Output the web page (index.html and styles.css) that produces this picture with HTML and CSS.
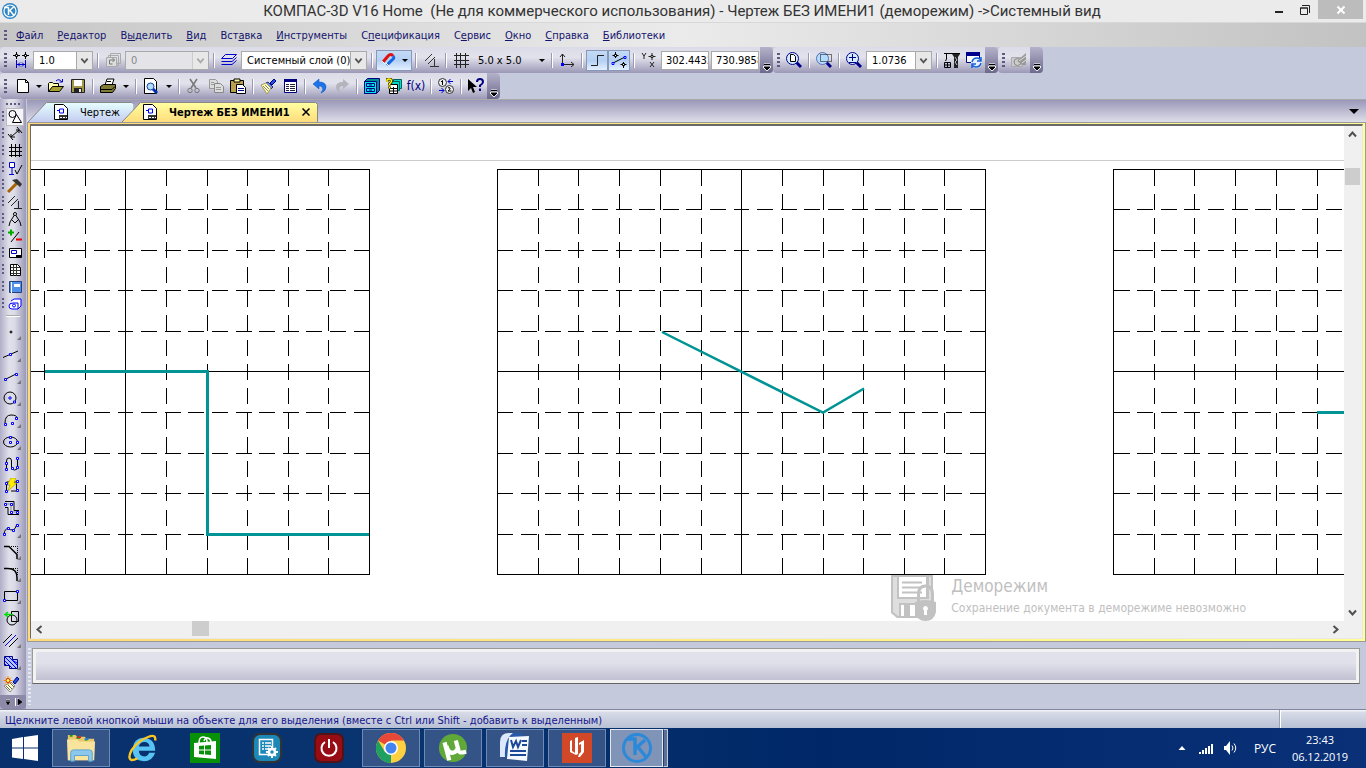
FILE: index.html
```html
<!DOCTYPE html>
<html lang="ru">
<head>
    <meta charset="UTF-8">
    <title>КОМПАС-3D V16 Home</title>
    <link rel="stylesheet" href="styles.css">
</head>
<body>
    <header class="titlebar">
        <svg class="app-icon" viewBox="0 0 16 16"><circle cx="8" cy="8" r="8" fill="#2f86c5"/><circle cx="8" cy="8" r="6" fill="none" stroke="#fff" stroke-width="1.2"/><path d="M2 4.500h5M6.500 4v8M6.500 8.500l5-4.500M8 7.500l4 5" stroke="#fff" stroke-width="1.500" fill="none"/></svg>
        <h1 class="title">КОМПАС-3D V16 Home&nbsp; (Не для коммерческого использования) - Чертеж БЕЗ ИМЕНИ1 (деморежим) -&gt;Системный вид</h1>
        <div class="win-buttons">
            <button class="win-btn" aria-label="Свернуть"><svg viewBox="0 0 12 12"><path d="M2 8h8" stroke="#222" stroke-width="2"/></svg></button>
            <button class="win-btn" aria-label="Развернуть"><svg viewBox="0 0 12 12"><path d="M1.500 4v6.500h7V4zM3 1.500h7.500V9M1 4h8" fill="none" stroke="#222"/></svg></button>
            <button class="win-btn win-close" aria-label="Закрыть"><svg viewBox="0 0 12 12"><path d="M2.500 2.500l7 7M9.500 2.500l-7 7" stroke="#fff" stroke-width="2"/></svg></button>
        </div>
    </header>

    <nav class="menu">
        <span class="grip"></span>
        <a href="#"><u>Ф</u>айл</a>
        <a href="#"><u>Р</u>едактор</a>
        <a href="#">В<u>ы</u>делить</a>
        <a href="#"><u>В</u>ид</a>
        <a href="#">Вст<u>а</u>вка</a>
        <a href="#"><u>И</u>нструменты</a>
        <a href="#">С<u>п</u>ецификация</a>
        <a href="#">С<u>е</u>рвис</a>
        <a href="#"><u>О</u>кно</a>
        <a href="#"><u>С</u>правка</a>
        <a href="#"><u>Б</u>иблиотеки</a>
    </nav>

    <div class="toolbars">
        <div class="toolbar-row">
            <!-- current state -->
            <div class="toolbar">
                <span class="grip"></span>
                <button class="tb" aria-label="Шаг курсора"><svg viewBox="0 0 16 16"><path d="M0 3.500h7M3.500 0v7M9 3.500h7M12.500 0v7" stroke="#000"/><path d="M2.500 2.500h2v2h-2zM11.500 2.500h2v2h-2z" fill="#fff" stroke="#000"/><path d="M3.500 8v8M12.500 8v8M4 12.500h8M7 10.500l-2 2 2 2M9 10.500l2 2-2 2" stroke="#00c"/></svg></button>
                <label class="combo w60"><select aria-label="Шаг"><option>1.0</option></select><svg viewBox="0 0 10 10"><path d="M1.500 3l3.500 4 3.500-4"/></svg></label>
                <span class="sep"></span>
                <button class="tb off" aria-label="Состояния видов"><svg viewBox="0 0 16 16"><path d="M5.500 5V1.500h10v10H12M3.500 7V3.500h10v10H11" stroke="#aaa"/><path d="M1.500 5.500h10v9h-10z" fill="#ddd" stroke="#aaa"/><path d="M4.500 12V8h5M7.500 6l2 2-2 2M4.500 12h3" stroke="#777"/></svg></button>
                <label class="combo w84 off"><select aria-label="Вид" disabled><option>0</option></select><svg viewBox="0 0 10 10"><path d="M1.500 3l3.500 4 3.500-4"/></svg></label>
                <span class="sep"></span>
                <button class="tb" aria-label="Слои"><svg viewBox="0 0 16 16"><path d="M4.500 2.500h11l-4 4h-11zM2.500 9.500h8.500l4.500-4M.5 9.500h3M2.500 12.500h8.500l4.500-4M.5 12.500h3" fill="none" stroke="#00c"/></svg></button>
                <label class="combo w126"><select aria-label="Слой"><option>Системный слой (0)</option></select><svg viewBox="0 0 10 10"><path d="M1.500 3l3.500 4 3.500-4"/></svg></label>
                <span class="sep"></span>
                <button class="tb wide on" aria-label="Привязки"><svg viewBox="0 0 16 16"><path d="M3 10L8 4q3-3 5 0" stroke="#e01010" stroke-width="3"/><path d="M13 4q2 2-1 4l-5 5" stroke="#1467e0" stroke-width="3"/><path d="M2 9l3 3M6 11l3 3" stroke="#fff" stroke-width="1"/></svg><i class="drop"></i></button>
                <span class="sep"></span>
                <button class="tb" aria-label="Запретить привязки"><svg viewBox="0 0 16 16"><path d="M2 9l7-7M5 12L12 5M7 14.500h9M11.500 7v7" stroke="#333"/></svg></button>
                <span class="sep"></span>
                <button class="tb" aria-label="Сетка"><svg viewBox="0 0 16 16"><path d="M1 3.500h15M1 8.500h15M1 12.500h15M3.500 1v15M7.500 1v15M12.500 1v15" stroke="#222"/></svg></button>
                <button class="grid-step">5.0 x 5.0<i class="drop"></i></button>
                <span class="sep"></span>
                <button class="tb" aria-label="Локальная СК"><svg viewBox="0 0 16 16"><path d="M3.500 13V2M1 5l2.500-3L6 5M4 12.500h11M12 10l3 2.500-3 2.500" stroke="#222"/><path d="M2 11h3v3H2z" fill="#00f"/></svg></button>
                <span class="sep"></span>
                <button class="tb on" aria-label="Ортогональное черчение"><svg viewBox="0 0 16 16"><path d="M2 13.500h6.500V3.500H15" stroke="#222"/></svg></button>
                <button class="tb on" aria-label="Округление"><svg viewBox="0 0 16 16"><path d="M4.500 0v6M1.500 3.500h6M12.500 10v6M9.500 12.500h6M2 11l12-6" stroke="#000"/><path d="M3.500 2.500h2v2h-2zM11.500 11.500h2v2h-2z" fill="#fff" stroke="#000"/><path d="M1 10.500h2v2H1zM13 4.500h2v2h-2z" fill="#fff" stroke="#00f"/></svg></button>
                <span class="sep"></span>
                <button class="tb" aria-label="Координаты"><svg viewBox="0 0 16 16"><path d="M1 1l2 3 2-3M3 4v3M9 10l4 5M13 10l-4 5M11 1v7M7.500 4.500h7" stroke="#222"/><path d="M10 3.500h2v2h-2z" fill="#fff" stroke="#222"/></svg></button>
                <input class="coord" aria-label="X" value="302.4432">
                <input class="coord" aria-label="Y" value="730.9858">
                <button class="cap" aria-label="Параметры панели"><svg viewBox="0 0 8 8"><path d="M1 1.500h6M1 4h6L4 7z" fill="#000" stroke="#fff" stroke-width="2"/><path d="M1 1.500h6M1 4h6L4 7z" fill="#000" stroke="#000" stroke-width="1"/></svg></button>
            </div>
            <!-- view -->
            <div class="toolbar">
                <span class="grip"></span>
                <button class="tb" aria-label="Показать все"><svg viewBox="0 0 16 16"><path d="M10 10l5 5" stroke="#00008c" stroke-width="3"/><circle cx="6.500" cy="6.500" r="6" fill="#d4ecff" stroke="#00008c"/><path d="M4.500 2.500h3l2 2v5h-5z" fill="#fff" stroke="#000"/></svg></button>
                <span class="sep"></span>
                <button class="tb" aria-label="Увеличить рамкой"><svg viewBox="0 0 16 16"><path d="M10 10l5 5" stroke="#00008c" stroke-width="3"/><circle cx="6.500" cy="6.500" r="6" fill="#b4dcff" stroke="#5870b0"/><path d="M4.500 2.500h11v7h-11z" stroke="#000" stroke-dasharray="1 1"/></svg></button>
                <span class="sep"></span>
                <button class="tb" aria-label="Масштаб"><svg viewBox="0 0 16 16"><path d="M10 10l5 5" stroke="#00008c" stroke-width="3"/><circle cx="6.500" cy="6.500" r="6" fill="#d4ecff" stroke="#00008c"/><path d="M3 5.500h7M6.500 2v7M3 10.500h7" stroke="#000080"/></svg></button>
                <label class="combo w66"><select aria-label="Текущий масштаб"><option>1.0736</option></select><svg viewBox="0 0 10 10"><path d="M1.500 3l3.500 4 3.500-4"/></svg></label>
                <span class="sep"></span>
                <button class="tb" aria-label="Перестроить"><svg viewBox="0 0 16 16"><path d="M0 1.500h16M2.500 2v5l-1 2M.5 10.500h6v5h-6zM0 13h7M3.500 10v6" stroke="#000"/><path d="M8 2h8l-2 3v11h-4V5z" fill="#222"/><path d="M11 5l2 3-2 2 2 3" stroke="#bbb"/></svg></button>
                <button class="tb" aria-label="Обновить"><svg viewBox="0 0 16 16"><path d="M.5 1.500h13v9H.5z" fill="#fff" stroke="#00008c"/><path d="M0 0h14v4H0z" fill="#00008c"/><circle cx="10.500" cy="10.500" r="5.500" fill="#e6f0ff"/><path d="M6 10q1-4 5-4 2 0 4 2M15 5v4h-4M15 11q-1 4-5 4-2 0-4-2M6 16v-4h4" stroke="#1660d8" stroke-width="1.500"/></svg></button>
                <button class="cap" aria-label="Параметры панели"><svg viewBox="0 0 8 8"><path d="M1 1.500h6M1 4h6L4 7z" fill="#000" stroke="#fff" stroke-width="2"/><path d="M1 1.500h6M1 4h6L4 7z" fill="#000" stroke="#000" stroke-width="1"/></svg></button>
            </div>
            <div class="toolbar">
                <span class="grip"></span>
                <button class="tb off" aria-label="Режим"><svg viewBox="0 0 16 16"><path d="M.5 5.500h11v9H.5z" fill="#ccc" stroke="#aaa"/><circle cx="6.500" cy="10" r="3.500" stroke="#888"/><path d="M6 9l9-8v12h-4z" fill="#999"/><path d="M8 9l7-5M11 11l4-3" stroke="#ddd"/></svg></button>
                <button class="cap" aria-label="Параметры панели"><svg viewBox="0 0 8 8"><path d="M1 1.500h6M1 4h6L4 7z" fill="#000" stroke="#fff" stroke-width="2"/><path d="M1 1.500h6M1 4h6L4 7z" fill="#000" stroke="#000" stroke-width="1"/></svg></button>
            </div>
        </div>

        <div class="toolbar-row">
            <!-- standard -->
            <div class="toolbar">
                <span class="grip"></span>
                <button class="tb shift" aria-label="Создать"><svg viewBox="0 0 16 16"><path d="M2.500 1.500h8l3 3v10h-11z" fill="#fff" stroke="#000"/><path d="M10.500 1.500v3h3" stroke="#000"/></svg></button>
                <button class="tb-drop" aria-label="Список"><i class="drop"></i></button>
                <button class="tb" aria-label="Открыть"><svg viewBox="0 0 16 16"><path d="M.5 13.500v-8l1-1h3l1 1h5v3" fill="#ffffb0" stroke="#000"/><path d="M.5 13.500l4-5h11l-4 5z" fill="#a8a030" stroke="#000"/><path d="M8 3q3-3 6 1M11.500 4h3V1" stroke="#00c"/></svg></button>
                <button class="tb" aria-label="Сохранить"><svg viewBox="0 0 16 16"><path d="M1.500 1.500h13v13h-13z" fill="#a09848" stroke="#222"/><path d="M4 2h8v6H4z" fill="#fff"/><path d="M4 10h8v4.500H4z" fill="#222"/><path d="M9 11h2v3H9z" fill="#eee"/></svg></button>
                <span class="sep"></span>
                <button class="tb" aria-label="Печать"><svg viewBox="0 0 16 16"><path d="M5 7l2-6h7l-2 6z" fill="#fff" stroke="#000"/><path d="M.5 8.500l3-2h12v4l-3 4H.5z" fill="#807c38" stroke="#000"/><path d="M1 11.500h11l3-3M7 3.500h4" stroke="#000"/></svg></button>
                <button class="tb-drop" aria-label="Список"><i class="drop"></i></button>
                <span class="sep"></span>
                <button class="tb" aria-label="Просмотр"><svg viewBox="0 0 16 16"><path d="M1.500.5h9l3 3v12h-12z" fill="#fff" stroke="#000"/><path d="M10 11l4 4" stroke="#0030b0" stroke-width="3"/><circle cx="7.500" cy="8.500" r="3.500" fill="#b4dcff" stroke="#1040a0"/></svg></button>
                <button class="tb-drop" aria-label="Список"><i class="drop"></i></button>
                <span class="sep"></span>
                <button class="tb off" aria-label="Вырезать"><svg viewBox="0 0 16 16"><path d="M4 1l6 9M11 1L5 10" stroke="#777" stroke-width="1.500"/><circle cx="4" cy="12.500" r="2.200" stroke="#777"/><circle cx="11" cy="12.500" r="2.200" stroke="#777"/></svg></button>
                <button class="tb off" aria-label="Копировать"><svg viewBox="0 0 16 16"><path d="M1.500 1.500h6l2 2v7h-8z" fill="#ddd" stroke="#999"/><path d="M6.500 5.500h6l3 3v6h-9z" fill="#ddd" stroke="#888"/><path d="M3 4.500h3M3 6.500h3M8 9.500h5M8 11.500h5" stroke="#999"/></svg></button>
                <button class="tb" aria-label="Вставить"><svg viewBox="0 0 16 16"><path d="M.5 2.500h13v12H.5z" fill="#b8a050" stroke="#000"/><path d="M4 3V1h6v3H4z" fill="#ffffa0" stroke="#000"/><path d="M6.500 6.500h6l3 3v6h-9z" fill="#fff" stroke="#000"/><path d="M8 10.500h6M8 12.500h6" stroke="#000080"/></svg></button>
                <span class="sep"></span>
                <button class="tb" aria-label="Копировать свойства"><svg viewBox="0 0 16 16"><path d="M10 5l4-4 2 2-4 4z" fill="#2050e0" stroke="#000080"/><path d="M6 5l2-1 5 5-2 2z" fill="#7090f0" stroke="#203080"/><path d="M1 7l5-2 5 5-4 6z" fill="#ffffb0" stroke="#a09860"/><path d="M3 8l5 5M5 7l4 4" stroke="#888"/></svg></button>
                <button class="tb" aria-label="Свойства"><svg viewBox="0 0 16 16"><path d="M2.500 1.500h12v13h-12z" fill="#fff" stroke="#000080"/><path d="M2 1h13v3H2z" fill="#000080"/><path d="M4 6.500h3M4 8.500h3M4 10.500h3M4 12.500h3M8 6.500h5M8 8.500h5M8 10.500h5M8 12.500h5" stroke="#223"/></svg></button>
                <span class="sep"></span>
                <button class="tb" aria-label="Отменить"><svg viewBox="0 0 16 16"><path d="M1 6l6-5v3q7 0 7 5 0 4-5 6 3-4 1-6-1-1-3-1v3z" fill="#1d74e8" stroke="#0050c0" stroke-width=".5"/></svg></button>
                <button class="tb off" aria-label="Повторить"><svg viewBox="0 0 16 16"><path d="M15 6L9 1v3Q2 4 2 9q0 4 5 6-3-4-1-6 1-1 3-1v3z" fill="#b4b4bc"/></svg></button>
                <span class="sep"></span>
                <button class="tb" aria-label="Менеджер библиотек"><svg viewBox="0 0 16 16"><path d="M.5 3.500l3-3h12v12l-3 3H.5z" fill="#008c8c" stroke="#000080"/><path d="M.5 3.500h12v12H.5z" fill="#00e4e4" stroke="#000080"/><path d="M2.500 5.500h8v3h-8zM2.500 10.500h8v3h-8zM5 7h3M5 12h3" stroke="#000080"/></svg></button>
                <button class="tb" aria-label="Менеджер шаблонов"><svg viewBox="0 0 16 16"><path d="M7.500 1.500h8v9h-8z" fill="#00d8c8" stroke="#006060"/><path d="M5.500 3.500h8v9h-8z" fill="#00d8c8" stroke="#006060"/><path d="M3.500 6.500h8v9h-8z" fill="#fff" stroke="#000"/><path d="M4 10.500h8M4 13h8M7.500 9v6" stroke="#000"/><path d="M1 4V2.500q0-1.500 2-1.500t2.500 1.500T3.500 6v1.500M3.500 8.500v2" stroke="#403000" stroke-width="3"/><path d="M1 4V2.500q0-1.500 2-1.500t2.500 1.500T3.500 6v1.500M3.500 8.500v2" stroke="#ffff00" stroke-width="1.500"/></svg></button>
                <button class="tb fx">f(x)</button>
                <span class="sep"></span>
                <button class="tb" aria-label="Перенумеровать"><svg viewBox="0 0 16 16"><circle cx="4.500" cy="4.500" r="4" fill="#eee" stroke="#333"/><circle cx="11.500" cy="11.500" r="4" fill="#eee" stroke="#333"/><path d="M3 4l1.500-1.500V7M10 10q1-1 2 0t-2 3h3.500" stroke="#000"/><path d="M10 3.500h5M12.500 1L10 3.500 12.500 6M1 12.500h5M3.500 10L6 12.500 3.500 15" stroke="#00c"/></svg></button>
                <span class="sep"></span>
                <button class="tb" aria-label="Справка"><svg viewBox="0 0 16 16"><path d="M0 1v12l3-3 2 5 2-1-2-5h4z" fill="#000"/><path d="M9 4q0-3 3-3t3 3q0 1.500-3 3.500V9M12 10.500v2.500" stroke="#000080" stroke-width="2"/></svg></button>
                <button class="cap" aria-label="Параметры панели"><svg viewBox="0 0 8 8"><path d="M1 1.500h6M1 4h6L4 7z" fill="#000" stroke="#fff" stroke-width="2"/><path d="M1 1.500h6M1 4h6L4 7z" fill="#000" stroke="#000" stroke-width="1"/></svg></button>
            </div>
        </div>
    </div>

    <main class="work">
        <aside class="side">
            <div class="side-dots"></div>
            <div class="pages">
                <button class="page on" aria-label="Геометрия"><svg viewBox="0 0 16 16"><circle cx="5.500" cy="5" r="3.500" stroke="#000"/><path d="M5.500 13.500l4-8 5 8z" fill="#fff" stroke="#000"/></svg></button>
                <button class="page" aria-label="Размеры"><svg viewBox="0 0 16 16"><path d="M4 11l8-7M4 8v3h4M9 4h3v3M1 8l5 6M10 1l5 6" stroke="#000"/></svg></button>
                <button class="page" aria-label="Обозначения"><svg viewBox="0 0 16 16"><path d="M2 4.500h13M2 8.500h13M2 12.500h13M4.500 1v13M8.500 1v13M12.500 1v13" stroke="#000"/></svg></button>
                <button class="page" aria-label="Обозначения ПСП"><svg viewBox="0 0 16 16"><path d="M2.500 2.500h5v5h-5zM5 8v6M2 14.500h5" fill="#fff" stroke="#00c"/><path d="M8 10l2 4 5-9" stroke="#000"/></svg></button>
                <button class="page" aria-label="Редактирование"><svg viewBox="0 0 16 16"><path d="M1 15l9-9" stroke="#a86000" stroke-width="3"/><path d="M5 3l5-1 5 5-2 3z" fill="#333"/></svg></button>
                <button class="page" aria-label="Параметризация"><svg viewBox="0 0 16 16"><path d="M1 9l7-7M4 12L11 5M7 14.500h8M11.500 7v7" stroke="#222"/></svg></button>
                <button class="page" aria-label="Измерения"><svg viewBox="0 0 16 16"><path d="M2 15l1-4 5-8 5 8 1 4M5 9l3 3 3-3" stroke="#000"/><circle cx="8" cy="3" r="1.500" fill="#fff" stroke="#000"/></svg></button>
                <button class="page" aria-label="Выделение"><svg viewBox="0 0 16 16"><path d="M1 4.500h6M4 1.500v6" stroke="#0a0" stroke-width="2"/><path d="M4 14l8-10" stroke="#000"/><path d="M9 11.500h6" stroke="#e00" stroke-width="2"/></svg></button>
                <button class="page" aria-label="Виды"><svg viewBox="0 0 16 16"><path d="M2.500 3.500h12v9h-12z" fill="#fff" stroke="#000"/><path d="M4.500 5.500h5v3h-5z" stroke="#00c"/><path d="M9 10h5v3H9z" fill="#000"/></svg></button>
                <button class="page" aria-label="Спецификация"><svg viewBox="0 0 16 16"><path d="M3.500 2.500h7l3 3v8h-10z" fill="#fff" stroke="#000"/><path d="M4 5.500h9M4 8.500h9M4 11.500h9M6.500 3v11M9.500 3v11" stroke="#333"/></svg></button>
                <button class="page" aria-label="Отчеты"><svg viewBox="0 0 16 16"><path d="M2.500 2.500h12v11h-12z" fill="#5090e8" stroke="#204080"/><path d="M4.500 3v11" stroke="#fff"/><path d="M7 5h6v3H7z" fill="#fff"/></svg></button>
                <button class="page" aria-label="Вставки"><svg viewBox="0 0 16 16"><path d="M4 5l3-2h7v7l-3 3H5q-3 0-3-3t4-3h5v6" fill="#fff" stroke="#00f"/><circle cx="7" cy="9.500" r="1.500" stroke="#00f"/></svg></button>
            </div>
            <div class="side-line"></div>
            <div class="tools">
                <button class="tool more" aria-label="Точка"><svg viewBox="0 0 16 16"><circle cx="8" cy="8" r="1" fill="#888" stroke="#000"/></svg></button>
                <button class="tool more" aria-label="Вспомогательная прямая"><svg viewBox="0 0 16 16"><path d="M0 11.500L15 5" stroke="#000"/><path d="M6.500 7.500h2v2h-2z" fill="#fff" stroke="#00f"/></svg></button>
                <button class="tool more" aria-label="Отрезок"><svg viewBox="0 0 16 16"><path d="M2 11.500L13 6" stroke="#000"/><path d="M1.500 10.500h2v2h-2zM12.500 5.500h2v2h-2z" fill="#fff" stroke="#00f"/></svg></button>
                <button class="tool more" aria-label="Окружность"><svg viewBox="0 0 16 16"><circle cx="7" cy="8" r="6" stroke="#000"/><path d="M6 7h2v2H6zM10.500 11h2v2h-2z" fill="#fff" stroke="#00f"/></svg></button>
                <button class="tool more" aria-label="Дуга"><svg viewBox="0 0 16 16"><path d="M2 11Q2 3 8 3t6 3" stroke="#000"/><path d="M1.500 11.500h2v2h-2zM8.500 10.500h2v2h-2zM12.500 5.500h2v2h-2z" fill="#fff" stroke="#00f"/></svg></button>
                <button class="tool more" aria-label="Эллипс"><svg viewBox="0 0 16 16"><ellipse cx="7.500" cy="8" rx="7" ry="5" stroke="#000"/><path d="M6.500 2.500h2v2h-2zM6.500 7.500h2v2h-2zM13.500 7.500h2v2h-2z" fill="#fff" stroke="#00f"/></svg></button>
                <button class="tool" aria-label="Непрерывный ввод"><svg viewBox="0 0 16 16"><path d="M3.500 13V5q0-3 2.500-3t2.500 3v6q0 3 3 3t3-3V3" stroke="#000"/><path d="M2.500 6.500h2v2h-2zM2.500 12.500h2v2h-2zM8.500 11.500h2v2h-2zM13.500 1.500h2v2h-2zM13.500 10.500h2v2h-2z" fill="#fff" stroke="#00f"/></svg></button>
                <button class="tool" aria-label="Линия"><svg viewBox="0 0 16 16"><path d="M3.500 13V4h10v9H8" stroke="#000"/><path d="M8 0h5l-2 5h3L5 13l2-6H4z" fill="#ffee00" stroke="#a09000" stroke-width=".6"/><path d="M2.500 4.500h2v2h-2zM2.500 12.500h2v2h-2zM13.500 2.500h2v2h-2zM13.500 11.500h2v2h-2z" fill="#fff" stroke="#00f"/></svg></button>
                <button class="tool" aria-label="Мультилиния"><svg viewBox="0 0 16 16"><path d="M2 1.500h9v9h5M2 7.500h3v7h11" stroke="#000"/><path d="M3 4h5v8h6" stroke="#888"/><path d="M1.500 3.500h2v2h-2zM7.500 3.500h2v2h-2zM7.500 11.500h2v2h-2zM13.500 11.500h2v2h-2z" fill="#fff" stroke="#00f"/></svg></button>
                <button class="tool more" aria-label="Кривая"><svg viewBox="0 0 16 16"><path d="M1 12q1-6 4-5t5 1 4-6" stroke="#000"/><path d="M.5 11.500h2v2h-2zM4.500 5.500h2v2h-2zM9.500 7.500h2v2h-2zM13.500 2.500h2v2h-2z" fill="#fff" stroke="#00f"/></svg></button>
                <button class="tool more" aria-label="Фаска"><svg viewBox="0 0 16 16"><path d="M1 2.500h5l8 8V15" stroke="#000" stroke-width="1.500"/><path d="M8 2.500h6.500V10" stroke="#000" stroke-dasharray="1 1"/></svg></button>
                <button class="tool more" aria-label="Скругление"><svg viewBox="0 0 16 16"><path d="M1 2.500h4q9 0 9 9V15" stroke="#000" stroke-width="1.500"/><path d="M8 2.500h6.500V10" stroke="#000" stroke-dasharray="1 1"/></svg></button>
                <button class="tool more" aria-label="Прямоугольник"><svg viewBox="0 0 16 16"><path d="M1.500 3.500h13v9h-13z" stroke="#000"/><path d="M.5 11.500h2v2h-2zM13.500 2.500h2v2h-2z" fill="#fff" stroke="#00f"/></svg></button>
                <button class="tool" aria-label="Собрать контур"><svg viewBox="0 0 16 16"><circle cx="9" cy="10" r="5" stroke="#000"/><path d="M8.500 1.500h7v10h-7z" stroke="#000"/><path d="M3 4.500h7M5 2L2 4.500 5 7" stroke="#0d0" stroke-width="1.500"/></svg></button>
                <button class="tool more" aria-label="Эквидистанта"><svg viewBox="0 0 16 16"><path d="M0 11l9-9M6 15l9-9" stroke="#000"/><path d="M2 14L13 3" stroke="#00f"/></svg></button>
                <button class="tool more" aria-label="Штриховка"><svg viewBox="0 0 16 16"><path d="M1.500 2.500h8v3h5v9h-8v-3h-5z" fill="#b4c4ff" stroke="#000080"/><path d="M2 3l11 11M2 7l7 7M6 3l8 8M2 10l1 1M9 6l5 3" stroke="#00f"/></svg></button>
                <button class="tool" aria-label="Кисть"><svg viewBox="0 0 16 16"><path d="M10 6l4-5 2 2-4 5z" fill="#2050e0" stroke="#000080"/><path d="M1 10l7-4 4 4-5 6z" fill="#ffffd0" stroke="#888"/><path d="M3 10l4 4M5 9l4 4M7 7l4 4" stroke="#666"/><path d="M5 0v9M.5 4.500h9M2 1.500l6 6M8 1.500l-6 6" stroke="#ff9000"/><circle cx="5" cy="4.500" r="2" fill="#ffff60" stroke="#e03000"/></svg></button>
            </div>
            <div class="side-cap"><svg viewBox="0 0 22 8"><path d="M4 1.500h4M4 4.500h4l-2 2.500zM13.500 0v8M16 0v8" stroke="#fff"/><path d="M4 2h4M4 4h4l-2 3zM16 1l4 3-4 3z" fill="#000" stroke="#000" stroke-width=".6"/></svg></div>
        </aside>

        <section class="document">
            <div class="tabs">
                <a class="tab" href="#">
                    <svg class="tab-shape" viewBox="0 0 106 20" preserveAspectRatio="none"><defs><linearGradient id="t1" x2="0" y2="1"><stop offset="0" stop-color="#e6ffff"/><stop offset="1" stop-color="#c4ccf0"/></linearGradient></defs><path d="M0 20L18.500 .5H104l2 2V20" fill="url(#t1)" stroke="#888"/></svg>
                    <svg class="tab-icon" viewBox="0 0 14 16"><path d="M.5.500h9l4 4v11H.5z" fill="#fff" stroke="#000"/><path d="M3 6.500h2M5.500 5v4h4V5z" stroke="#00f" fill="none"/><path d="M5 12.500h8M5 14.500h8M5.500 11v4M8.500 11v4M11.500 11v4M5 11.500h8" stroke="#333" fill="none"/></svg>
                    <span>Чертеж</span>
                </a>
                <a class="tab active" href="#">
                    <svg class="tab-shape" viewBox="0 0 196 20" preserveAspectRatio="none"><defs><linearGradient id="t2" x2="0" y2="1"><stop offset="0" stop-color="#ffffa0"/><stop offset="1" stop-color="#ffdc7c"/></linearGradient></defs><path d="M0 20L18.500 .5H193.500l2 2V20" fill="url(#t2)" stroke="#888"/></svg>
                    <svg class="tab-icon" viewBox="0 0 14 16"><path d="M.5.500h9l4 4v11H.5z" fill="#fff" stroke="#000"/><path d="M3 6.500h2M5.500 5v4h4V5z" stroke="#00f" fill="none"/><path d="M5 12.500h8M5 14.500h8M5.500 11v4M8.500 11v4M11.500 11v4M5 11.500h8" stroke="#333" fill="none"/></svg>
                    <span>Чертеж БЕЗ ИМЕНИ1</span>
                    <svg class="tab-close" viewBox="0 0 8 8"><path d="M.5.500l7 7M7.500.500l-7 7" stroke="#000" stroke-width="1.500"/></svg>
                </a>
                <button class="tab-list" aria-label="Список окон"></button>
            </div>

            <div class="frame">
                <div class="sheet">
                    <div class="canvas">
                        <svg class="drawing" shape-rendering="crispEdges">
                            <defs>
                                <g id="grid" fill="none" stroke="#000">
                                    <path d="M0 0H488V405H0zM244 0V405M0 202H488"/>
                                    <path stroke-dasharray="16 8.300" d="M41 0V405M81 0V405M122 0V405M163 0V405M204 0V405M285 0V405M326 0V405M366 0V405M407 0V405M447 0V405"/>
                                    <path stroke-dasharray="16 7.600" d="M0 40H488M0 81H488M0 121H488M0 162H488M0 243H488M0 284H488M0 324H488M0 365H488"/>
                                </g>
                            </defs>
                            <path d="M0 34.500H4000" stroke="#ccc"/>
                            <use href="#grid" x="-149.500" y="43.500"/>
                            <use href="#grid" x="466.500" y="43.500"/>
                            <use href="#grid" x="1082.500" y="43.500"/>
                            <g fill="none" stroke="#009494" stroke-width="3">
                                <path d="M14 245.500H176.500V408.500H338"/>
                                <path d="M631 206L792 286.500L833 262.500" stroke-width="2.500" shape-rendering="auto"/>
                                <path d="M1286 286.500H1400"/>
                            </g>
                        </svg>
                        <div class="demo">
                            <svg viewBox="0 0 46 46"><path d="M0 0h42v43H6l-6-5z" fill="#c2c2c2"/><path d="M2 2h4v22h32V2h2v39H7l-5-4z" fill="#dedede"/><path d="M8 2h27v20H8z" fill="#fff"/><path d="M11 7.500h20M11 12.500h20M11 17.500h20" stroke="#c2c2c2" stroke-width="2"/><path d="M8 28h24v13H8z" fill="#c2c2c2"/><path d="M10 30h14v11H10z" fill="#fff"/><path d="M13 30h6v11h-6z" fill="#c2c2c2"/><path d="M27.500 28v-9q0-8 7-8t7 8v9" fill="none" stroke="#c2c2c2" stroke-width="3"/><path d="M24 27q11-4 21 0v10q-2 9-10.500 9T24 37z" fill="#c2c2c2"/><path d="M34.500 31a2.500 2.500 0 0 1 1.500 4.500V40h-3v-4.500a2.500 2.500 0 0 1 1.500-4.500z" fill="#fff"/></svg>
                            <div>
                                <p class="demo-title">Деморежим</p>
                                <p class="demo-note">Сохранение документа в деморежиме невозможно</p>
                            </div>
                        </div>
                    </div>
                    <div class="vscroll">
                        <button aria-label="Вверх"><svg viewBox="0 0 9 9"><path d="M1 6.500l3.500-4L8 6.500"/></svg></button>
                        <span class="thumb"></span>
                        <button aria-label="Вниз"><svg viewBox="0 0 9 9"><path d="M1 2.500l3.500 4L8 2.500"/></svg></button>
                    </div>
                    <div class="hscroll">
                        <button aria-label="Влево"><svg viewBox="0 0 9 9"><path d="M6.500 1l-4 3.500L6.500 8"/></svg></button>
                        <span class="thumb"></span>
                        <button aria-label="Вправо"><svg viewBox="0 0 9 9"><path d="M2.500 1l4 3.500L2.500 8"/></svg></button>
                    </div>
                </div>
            </div>

            <div class="props">
                <span class="props-dots"></span>
                <div class="props-panel"></div>
            </div>
        </section>
    </main>

    <div class="status">
        <span class="status-text">Щелкните левой кнопкой мыши на объекте для его выделения (вместе с Ctrl или Shift - добавить к выделенным)</span>
        <span class="status-cell"></span>
    </div>

    <footer class="taskbar">
        <button class="start" aria-label="Пуск"><svg viewBox="0 0 26 26"><path d="M0 4l11-2v10.500H0zM12 2l14-2v12.500H12zM0 13.500h11V24L0 22.500zM12 13.500h14V26l-14-2z" fill="#fff"/></svg></button>
        <button class="task open" aria-label="Проводник"><svg viewBox="0 0 32 30"><path d="M2 1h8l2 2h8l2 2h8v23H2z" fill="#e8c868"/><path d="M1 6h11l2 2h17l-1 20H2z" fill="#f8e49c"/><path d="M4 2h3M11 4h4M20 6h3" stroke="#189820" stroke-width="2"/><path d="M12 3.500h4" stroke="#d02020" stroke-width="2"/><path d="M20 5.500h4" stroke="#2080d8" stroke-width="2"/><path d="M5 29V20q0-3 3-3h17q3 0 3 3v9h-4v-6H9v6z" fill="#8cc8ec" stroke="#58a0d0"/></svg></button>
        <button class="task" aria-label="Internet Explorer"><svg viewBox="0 0 32 30"><path fill-rule="evenodd" d="M29 20q-3 9-12 9Q5 28 5 16.500 6 4 17 4q12 1 12 14H11.500q.5 6 6 6 3.500 0 5-4zM11.500 13.500H23q-.5-5-5.500-5t-6 5z" fill="#58c4f4"/><path d="M29 7q1-7-7-4Q11 7 4 17-1 26 4 28q3 0 6-2" fill="none" stroke="#fcc820" stroke-width="2.500"/></svg></button>
        <button class="task" aria-label="Магазин"><svg viewBox="0 0 30 30"><path d="M0 0h30v30H0z" fill="#089008"/><path d="M4 10l22-2v18L4 24z" fill="#fff"/><path d="M9 10q0-6 4-6t4 5M14 8q1-4 4-3t3 4" fill="none" stroke="#fff" stroke-width="1.500"/><path d="M9 13l5-.5v4H9zM15 12.500l6-.5v4.500h-6zM9 17.500h5v4L9 21zM15 17.500h6V22l-6-.5z" fill="#089008"/></svg></button>
        <button class="task" aria-label="Настройки"><svg viewBox="0 0 30 30"><rect x="1" y="1" width="28" height="28" rx="7" fill="#1c88b8" stroke="#333" stroke-width="2"/><path d="M7.500 6.500h13v15h-13z" fill="none" stroke="#fff" stroke-width="1.500"/><path d="M10 10h2M10 13h2M10 16h2M13 10h6M13 13h6M13 16h4" stroke="#fff" stroke-width="1.500"/><circle cx="20" cy="19" r="3" fill="#1c88b8" stroke="#fff" stroke-width="2.500"/><path d="M20 13v3M20 22v3M14 19h3M23 19h3M16 15l2 2M22 21l2 2M24 15l-2 2M18 21l-2 2" stroke="#fff" stroke-width="2"/></svg></button>
        <button class="task" aria-label="Выключение"><svg viewBox="0 0 30 30"><rect x="1" y="1" width="28" height="28" rx="6" fill="#980c14" stroke="#501418" stroke-width="2"/><path d="M11 9a7.500 7.500 0 1 0 8 0M15 6v9" fill="none" stroke="#fff" stroke-width="2"/></svg></button>
        <button class="task open" aria-label="Chrome"><svg viewBox="0 0 30 30"><circle cx="15" cy="15" r="15" fill="#fcd040"/><path d="M15 15L2 7.500A15 15 0 0 1 28 7.500H15z" fill="#e84838"/><path d="M15 15v15A15 15 0 0 1 2 7.500L9 19z" fill="#20a060"/><path d="M15 30l7-12-7-3z" fill="#fcd040"/><circle cx="15" cy="15" r="7" fill="#fff"/><circle cx="15" cy="15" r="5.500" fill="#4484f0"/></svg></button>
        <button class="task open" aria-label="uTorrent"><svg viewBox="0 0 32 30"><circle cx="16" cy="15" r="15" fill="#60a838"/><path d="M7 9l5 19M9 13q2 8 7 7t4-5M19 7l3 11q1 3 8 1" fill="none" stroke="#fff" stroke-width="4.500"/></svg></button>
        <button class="task open" aria-label="Word"><svg viewBox="0 0 30 30"><path d="M2 24V8q0-8 8-8h12v24z" fill="#2858a8"/><path d="M0 24V9q0-9 9-9h4Q4 6 5 24z" fill="#dce8fc"/><path d="M9 4l20-1-2 25-20-2z" fill="#f4f8ff"/><path d="M11 7l2 7 3-6 2 6 3-7M22 8h5M22 12h5M10 18h16M10 22h16" fill="none" stroke="#1c4898" stroke-width="2"/></svg></button>
        <button class="task open" aria-label="Редактор"><svg viewBox="0 0 30 30"><path d="M0 0h30v30H0z" fill="#d04828"/><path d="M8 8l2-1v11l3 2V5l3-1v17l-2 1-6-3zM17 10l5-3v12l-4 5h-2l1-3 2-2v-8l-2 1z" fill="#fff"/></svg></button>
        <button class="task open current" aria-label="КОМПАС"><svg viewBox="0 0 30 30"><circle cx="15" cy="15" r="13.500" fill="none" stroke="#2c88d8" stroke-width="3"/><path d="M5 6h8v16M13 16l10-9M16 14l8 10" fill="none" stroke="#2c88d8" stroke-width="3.500"/></svg></button>
        <span class="task-stack"></span>
        <div class="tray">
            <button class="tray-btn" aria-label="Значки"><svg viewBox="0 0 16 16"><path d="M4.500 10L8 6l3.500 4z" fill="#fff"/></svg></button>
            <button class="tray-btn" aria-label="Сеть"><svg viewBox="0 0 16 16"><path d="M1 12h2v2H1zM4 10h2v4H4zM7 8h2v6H7zM10 6h2v8h-2zM13 4h2v10h-2z" fill="#fff"/></svg></button>
            <button class="tray-btn" aria-label="Громкость"><svg viewBox="0 0 16 16"><path d="M2 6h2l4-5v14l-4-5H2z" fill="#fff"/><path d="M10 5.500q2 2.500 0 5M12 3.500q3.500 4.500 0 9" fill="none" stroke="#fff"/></svg></button>
            <span class="lang">РУС</span>
            <div class="clock"><span>23:43</span><span>06.12.2019</span></div>
        </div>
    </footer>
</body>
</html>
```
FILE: styles.css
```css
* {
    box-sizing: border-box;
}

body {
    margin: 0;
    height: 100vh;
    display: flex;
    flex-direction: column;
    overflow: hidden;
    background-color: #c4cadb;
    color: #000;
    font-family: "DejaVu Sans Condensed", "DejaVu Sans", sans-serif;
    font-size: 11px;
}

button {
    margin: 0;
    padding: 0;
    border: 0;
    background: none;
    color: inherit;
    font: inherit;
}

a {
    color: inherit;
    text-decoration: none;
}

svg {
    display: block;
}

/* Title bar */
.titlebar {
    display: flex;
    align-items: center;
    height: 23px;
    padding-left: 2px;
    background-color: #ebebeb;
    border-bottom: 1px solid #d8d8d8;
}

.app-icon {
    width: 16px;
    height: 16px;
}

.title {
    flex: 1;
    margin: 0;
    padding-left: 80px;
    color: #333;
    font-family: Roboto, sans-serif;
    font-size: 15px;
    font-weight: 400;
    line-height: 22px;
    text-align: center;
    white-space: nowrap;
}

.win-buttons {
    display: flex;
    align-self: flex-start;
    padding-right: 3px;
}

.win-btn {
    display: flex;
    align-items: center;
    justify-content: center;
    width: 26px;
    height: 19px;
}

.win-btn svg {
    width: 12px;
    height: 12px;
}

.win-close {
    width: 45px;
    background-color: #bcbcbc;
}

/* Menu */
.menu {
    display: flex;
    align-items: center;
    height: 24px;
    background: linear-gradient(to right, #c6c6c6, #ebebeb 50%, #c2c2c2);
    color: #14146e;
}

.menu a {
    padding: 0 7px;
}

.menu .grip {
    height: 10px;
    margin-right: 2px;
}

.grip {
    width: 3px;
    height: 14px;
    margin: 0 3px 0 4px;
    background: repeating-linear-gradient(#5c5a80 0 2px, transparent 2px 4px);
}

/* Toolbars */
.toolbar-row {
    display: flex;
    height: 26px;
}

.toolbar {
    display: flex;
    align-items: center;
    height: 26px;
    border-radius: 4px;
    background: linear-gradient(#dcdce8, #e2e2ec 40%, #9a98b6);
    overflow: hidden;
}

.tb {
    display: flex;
    align-items: center;
    justify-content: center;
    width: 22px;
    height: 21px;
}

.tb svg {
    width: 16px;
    height: 16px;
}

.tb svg,
.page svg,
.tool svg {
    fill: none;
}

.tb.on {
    border: 1px solid #8898b8;
    background: linear-gradient(#c4daf4, #b4d0f4 50%, #e4f0ff);
}

.tb.wide {
    width: 36px;
    gap: 6px;
}

.tb.shift {
    padding-left: 4px;
}

.tb.fx {
    color: #000080;
    font-size: 12px;
}

.tb-drop {
    width: 13px;
    height: 21px;
    padding-left: 4px;
}

.drop {
    display: block;
    border: 3px solid transparent;
    border-top-color: #000;
    border-bottom: 0;
    width: 0;
}

.sep {
    width: 2px;
    height: 15px;
    margin: 0 3px;
    border-left: 1px solid #9a98b4;
    border-right: 1px solid #fff;
}

.grid-step {
    display: flex;
    align-items: center;
    justify-content: space-between;
    width: 76px;
    padding: 0 3px 0 6px;
}

.combo {
    position: relative;
    height: 19px;
    margin: 0 1px;
}

.combo select {
    appearance: none;
    width: 100%;
    height: 19px;
    padding: 0 13px 0 5px;
    border: 1px solid #aaa;
    border-radius: 0;
    background-color: #fff;
    color: #000;
    font: inherit;
    opacity: 1;
}

.combo svg {
    position: absolute;
    top: 1px;
    right: 1px;
    width: 16px;
    height: 17px;
    padding: 3px;
    border-left: 1px solid #aaa;
    background-color: #e8e8e8;
    fill: none;
    stroke: #555;
    stroke-width: 2;
    pointer-events: none;
}

.combo.off select {
    background-color: #e4e4e8;
    color: #888;
}

.combo.off svg {
    border-left-color: #ccc;
    stroke: #aaa;
}

.w60 {
    width: 60px;
}

.w66 {
    width: 66px;
}

.w84 {
    width: 84px;
}

.w126 {
    width: 126px;
}

.coord {
    width: 48px;
    height: 19px;
    margin: 0 1px;
    padding: 0 0 0 4px;
    border: 1px solid #aaa;
    background-color: #fff;
    font: inherit;
}

.cap {
    display: flex;
    align-items: flex-end;
    justify-content: center;
    width: 13px;
    height: 26px;
    padding-bottom: 2px;
    background: linear-gradient(#b4b2ca, #6c6a8c);
}

.cap svg {
    width: 8px;
    height: 8px;
}

/* Work area */
.work {
    display: flex;
    flex: 1;
    min-height: 0;
}

.side {
    display: flex;
    flex-direction: column;
    width: 27px;
    background: linear-gradient(to right, #b0aec8, #e0e0ea 35%, #dcdce8 55%, #9a98b6);
    border-right: 1px solid #c4cadb;
}

.side-dots {
    width: 15px;
    height: 2px;
    margin: 4px 0 3px 6px;
    background: repeating-linear-gradient(to right, #5c5a80 0 2px, transparent 2px 4px);
}

.page {
    display: flex;
    align-items: center;
    width: 25px;
    height: 17px;
    padding-left: 7px;
    background: repeating-linear-gradient(#5c5a80 0 2px, transparent 2px 4px) 2px 3px / 2px 10px no-repeat;
}

.page svg {
    width: 16px;
    height: 16px;
}

.page.on svg {
    background-color: #f4f4fa;
    outline: 1px solid #bbb;
}

.side-line {
    width: 14px;
    height: 2px;
    margin: 3px 0 4px 6px;
    background-color: #fff;
    border-top: 1px solid #aaa;
}

.tool {
    position: relative;
    display: flex;
    align-items: center;
    width: 25px;
    height: 22px;
    padding-left: 3px;
}

.tool svg {
    width: 16px;
    height: 16px;
}

.tool.more::after {
    content: "";
    position: absolute;
    right: 4px;
    bottom: 3px;
    border: 2px solid #777;
    border-top-color: transparent;
    border-left-color: transparent;
}

.side-cap {
    flex: 1;
    padding: 3px 2px;
    border-radius: 0 0 4px 4px;
    background-color: #8c8aa8;
}

.side-cap svg {
    width: 22px;
    height: 8px;
}

.document {
    display: flex;
    flex: 1;
    flex-direction: column;
    min-width: 0;
}

.tabs {
    display: flex;
    align-items: flex-end;
    height: 23px;
    border-top: 1px solid #aaa;
    background: linear-gradient(#9a98b8, #dedeea);
}

.tab {
    position: relative;
    display: flex;
    align-items: center;
    height: 20px;
    margin-left: 1px;
    padding-left: 26px;
    width: 106px;
}

.tab.active {
    width: 196px;
    margin-left: -12px;
    padding-left: 21px;
    font-weight: 700;
}

.tab-shape {
    position: absolute;
    top: 0;
    left: 0;
    width: 100%;
    height: 20px;
}

.tab-icon {
    position: relative;
    width: 14px;
    height: 16px;
    margin-right: 12px;
}

.tab span {
    position: relative;
    white-space: nowrap;
}

.tab-close {
    position: relative;
    width: 8px;
    height: 8px;
    margin: 0 8px 0 auto;
}

.tab-list {
    align-self: center;
    margin: 0 7px 0 auto;
    border: 5px solid transparent;
    border-top-color: #000;
    border-bottom: 0;
}

.frame {
    display: flex;
    flex: 1;
    min-height: 0;
    padding: 1px 2px 2px;
    border: 1px solid #9a9a9a;
    background: linear-gradient(to right, #ffd97a, #ffff94);
}

.sheet {
    display: grid;
    flex: 1;
    grid-template-columns: minmax(0, 1fr) 18px;
    grid-template-rows: minmax(0, 1fr) 17px;
    border: 1px solid #e8e8e8;
    border-top: 2px solid #696969;
    border-left-color: #696969;
    background-color: #f0f0f0;
}

.canvas {
    position: relative;
    overflow: hidden;
    background-color: #fff;
}

.drawing {
    width: 100%;
    height: 100%;
}

/* Demo mode notice floats over the drawing */
.demo {
    position: absolute;
    right: 98px;
    bottom: 0;
    display: flex;
    gap: 14px;
    color: #c0c0c0;
}

.demo svg {
    width: 46px;
    height: 46px;
}

.demo p {
    margin: 0;
    line-height: 22px;
    white-space: nowrap;
}

.demo-title {
    font-size: 17px;
}

.demo-note {
    font-size: 12px;
}

.vscroll,
.hscroll {
    display: flex;
    justify-content: space-between;
}

.vscroll {
    flex-direction: column;
}

.vscroll button,
.hscroll button {
    display: flex;
    align-items: center;
    justify-content: center;
    width: 17px;
    height: 17px;
}

.vscroll svg,
.hscroll svg {
    width: 9px;
    height: 9px;
    fill: none;
    stroke: #505050;
    stroke-width: 2;
}

.vscroll .thumb {
    width: 15px;
    height: 17px;
    margin: 25px 0 auto 1px;
    background-color: #cdcdcd;
}

.hscroll .thumb {
    width: 17px;
    height: 15px;
    margin: 0 auto 0 144px;
    background-color: #cdcdcd;
}

.props {
    display: flex;
    height: 67px;
    padding: 6px 6px 25px 1px;
}

.props-dots {
    width: 3px;
    height: 57px;
    margin-right: 1px;
    background: repeating-linear-gradient(#e8e8f0 0 2px, transparent 2px 4px);
}

.props-panel {
    flex: 1;
    padding: 3px;
    border: 1px solid #9a9a9a;
    border-bottom-color: #666;
    background: linear-gradient(#e2e2ec, #e0e0ea 40%, #c2c0d2) content-box, #f2f2f2;
}

/* Status bar */
.status {
    display: flex;
    height: 19px;
    padding-left: 5px;
    border-top: 1px solid #80849c;
    background: linear-gradient(#f0f2f8 0 1px, #d8dce8 2px, #b8c0d4);
    color: #14148c;
    line-height: 21px;
}

.status-text {
    flex: 1;
    white-space: nowrap;
}

.status-cell {
    width: 87px;
    border-left: 1px solid #9aa0b4;
    box-shadow: inset 1px 0 #fff;
}

/* Windows taskbar */
.taskbar {
    display: flex;
    align-items: center;
    height: 40px;
    background: linear-gradient(to right, #08306c, #083470 30%, #002868 60%, #0a3078);
    color: #fff;
    font-family: "Open Sans", sans-serif;
    font-size: 12px;
}

.start {
    width: 52px;
    padding-left: 12px;
}

.start svg {
    width: 26px;
    height: 26px;
}

.task {
    display: flex;
    align-items: center;
    justify-content: center;
    width: 58px;
    height: 38px;
    margin-right: 4px;
}

.task svg {
    width: 30px;
    height: 30px;
}

.task.open {
    border: 1px solid #7088b4;
    background-color: #345488;
}

.task.current {
    width: 53px;
    margin-right: 0;
    border-color: #e4e8f0;
    background-color: #8094b8;
}

.task-stack {
    width: 5px;
    height: 38px;
    border: 1px solid #c4ccdc;
    border-left-color: #203c70;
    background-color: #5c7098;
}

.tray {
    display: flex;
    align-items: center;
    margin-left: auto;
    padding-right: 18px;
}

.tray-btn {
    width: 24px;
    padding-left: 4px;
}

.tray-btn svg {
    width: 16px;
    height: 16px;
}

.lang {
    width: 23px;
    margin: 0 15px 0 12px;
}

.clock {
    display: flex;
    flex-direction: column;
    align-items: center;
    font-size: 11px;
    line-height: 17px;
}
```
